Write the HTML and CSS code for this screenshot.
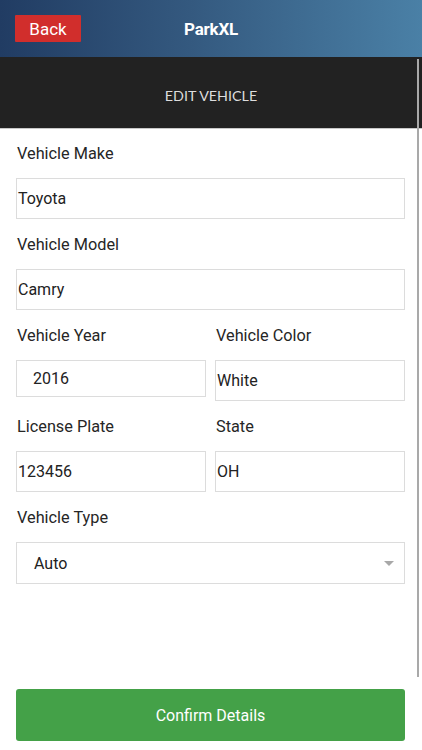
FILE: index.html
```html
<!DOCTYPE html>
<html>
<head>
<meta charset="utf-8">
<link rel="stylesheet" href="styles.css">
</head>
<body>
<div class="app">
  <header class="topbar">
    <button class="back">Back</button>
    <div class="brand">ParkXL</div>
    <div class="spacer"></div>
  </header>
  <div class="subbar">EDIT VEHICLE</div>
  <main class="form">
    <div class="field">
      <div class="label">Vehicle Make</div>
      <div class="input">Toyota</div>
    </div>
    <div class="field">
      <div class="label">Vehicle Model</div>
      <div class="input">Camry</div>
    </div>
    <div class="row">
      <div class="field">
        <div class="label">Vehicle Year</div>
        <div class="input input-year">2016</div>
      </div>
      <div class="field">
        <div class="label">Vehicle Color</div>
        <div class="input">White</div>
      </div>
    </div>
    <div class="row">
      <div class="field">
        <div class="label">License Plate</div>
        <div class="input">123456</div>
      </div>
      <div class="field">
        <div class="label">State</div>
        <div class="input">OH</div>
      </div>
    </div>
    <div class="field">
      <div class="label">Vehicle Type</div>
      <div class="input select"><span>Auto</span><span class="caret"></span></div>
    </div>
  </main>
  <div class="actions">
    <button class="confirm">Confirm Details</button>
  </div>
  <div class="scrollbar"></div>
</div>
</body>
</html>
```
FILE: styles.css
```css
* { box-sizing: border-box; }
html, body { margin: 0; padding: 0; }
body {
  width: 422px;
  height: 750px;
  background: #fff;
  font-family: Roboto, "Liberation Sans", sans-serif;
  overflow: hidden;
}
.app {
  position: relative;
  height: 750px;
  display: flex;
  flex-direction: column;
}
.topbar {
  height: 57px;
  flex: none;
  display: flex;
  align-items: center;
  padding: 0 15px;
  background: linear-gradient(90deg, #213c63 0%, #34597f 45%, #4a80a6 100%);
}
.back {
  width: 66px;
  height: 27px;
  margin: 0;
  border: none;
  border-radius: 1px;
  background: #d12e2c;
  color: #fff;
  font-family: Roboto, "Liberation Sans", sans-serif;
  font-size: 17px;
  padding: 0;
}
.brand {
  flex: 1;
  text-align: center;
  color: #fff;
  font-weight: 700;
  font-size: 17px;
  letter-spacing: -0.2px;
}
.spacer { width: 66px; }
.subbar {
  height: 72px;
  flex: none;
  background: #222;
  border-bottom: 1px solid #c8c8c8;
  color: #ddd;
  font-family: Lato, "Open Sans", sans-serif;
  font-size: 14.3px;
  display: flex;
  align-items: center;
  justify-content: center;
  padding-top: 6px;
}
.form {
  flex: 1;
  padding: 15px 17px 0 16px;
  display: flex;
  flex-direction: column;
}
.field {
  display: flex;
  flex-direction: column;
  margin-bottom: 16px;
}
.row {
  display: grid;
  grid-template-columns: 190px 190px;
  column-gap: 9px;
  align-items: start;
}
.label {
  height: 19px;
  line-height: 20px;
  font-size: 16.3px;
  color: #262626;
  margin-bottom: 15px;
  padding-left: 1px;
}
.input {
  height: 41px;
  border: 1px solid #dcdcdc;
  display: flex;
  align-items: center;
  padding: 0 1px;
  font-size: 16px;
  color: #222;
}
.input-year {
  height: 37px;
  padding-left: 16px;
}
.select {
  height: 42px;
  padding-left: 17px;
  padding-right: 10px;
  justify-content: space-between;
}
.caret {
  width: 0;
  height: 0;
  border-left: 5px solid transparent;
  border-right: 5px solid transparent;
  border-top: 5px solid #a8a8a8;
}
.actions {
  flex: none;
  padding: 0 17px 9px 16px;
}
.confirm {
  display: block;
  width: 100%;
  height: 52px;
  margin: 0;
  border: none;
  border-radius: 3px;
  background: #44a148;
  color: #fff;
  font-family: Roboto, "Liberation Sans", sans-serif;
  font-size: 16px;
}
.scrollbar {
  position: absolute;
  left: 417px;
  top: 59px;
  width: 2px;
  height: 618px;
  background: #a9a9a9;
}
```
